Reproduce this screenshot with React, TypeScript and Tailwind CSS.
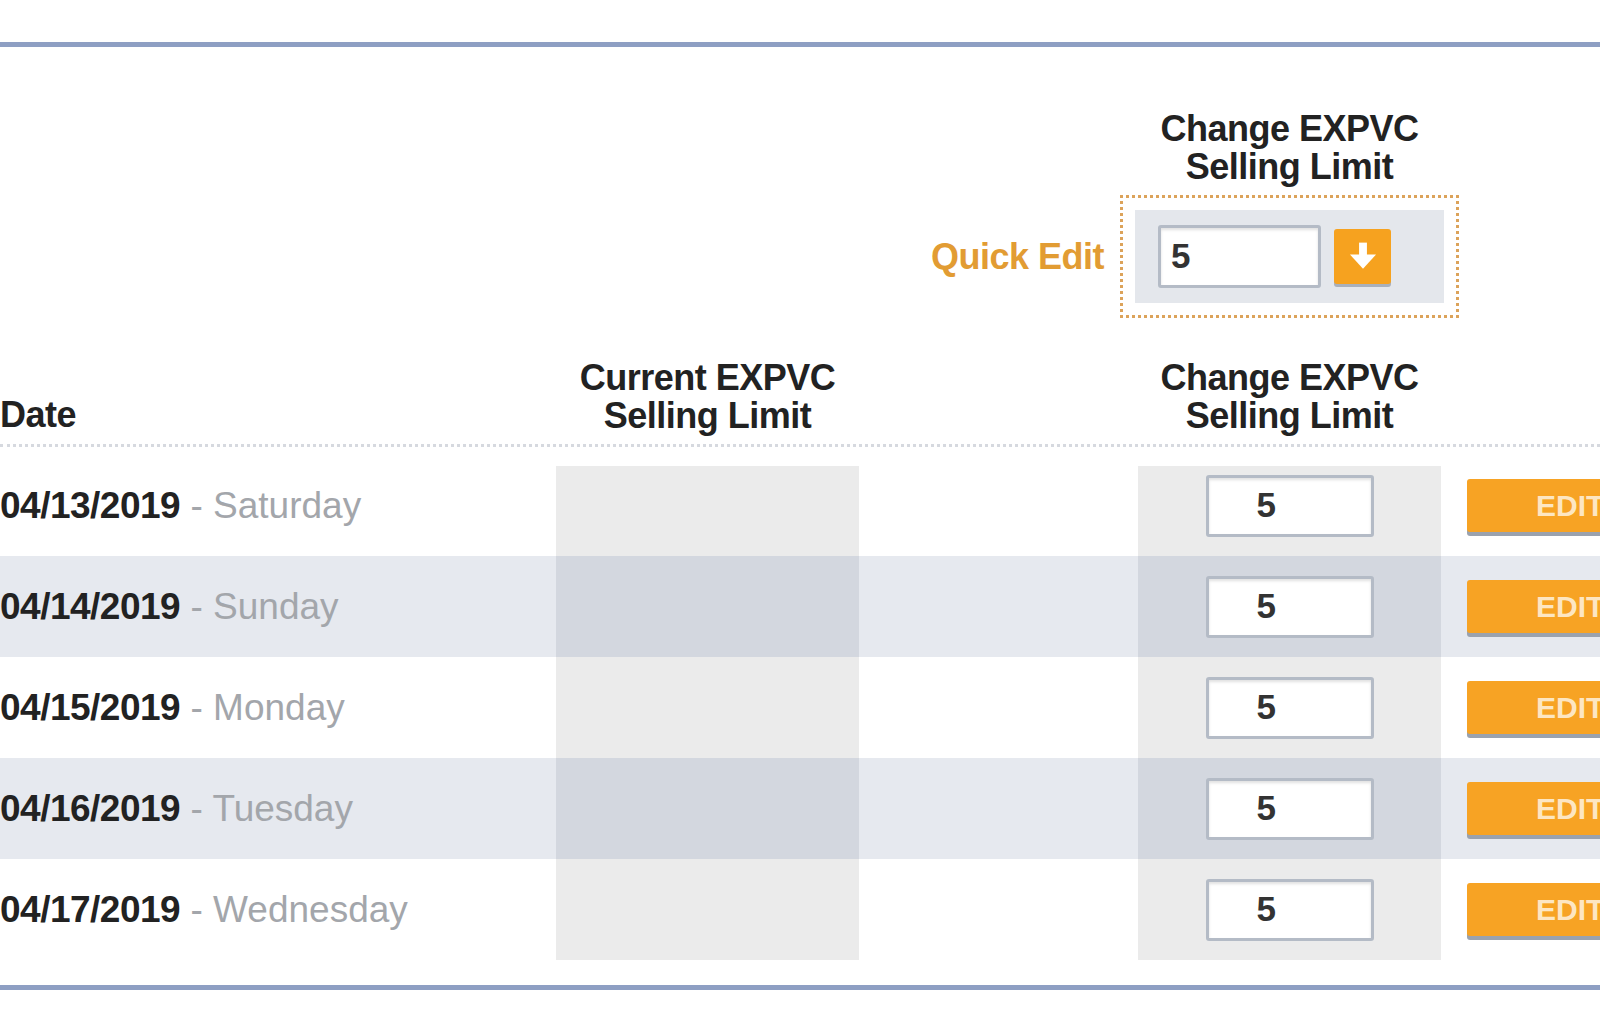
import React from "react";

const rows = [
  { date: "04/13/2019", day: "Saturday", limit: "5" },
  { date: "04/14/2019", day: "Sunday", limit: "5" },
  { date: "04/15/2019", day: "Monday", limit: "5" },
  { date: "04/16/2019", day: "Tuesday", limit: "5" },
  { date: "04/17/2019", day: "Wednesday", limit: "5" },
];

const cols = "grid grid-cols-[556px_303px_279px_303px_1fr]";

const DownArrow = () => (
  <svg width="34" height="34" viewBox="0 0 26 26">
    <rect x="10" y="2" width="6" height="10" fill="#fff" />
    <path d="M3 11 L23 11 L13 22 Z" fill="#fff" />
  </svg>
);

const LimitInput = ({ value, quick }: { value: string; quick?: boolean }) => (
  <div
    className={
      quick
        ? "w-[163px] h-[63px] bg-white border-[3px] border-[#b4bbc6] rounded-[3px] shadow-[inset_0_2px_3px_rgba(0,0,0,0.12)] flex items-center pl-[10px] text-[35px] font-bold text-[#333]"
        : "w-[168px] h-[62px] bg-white border-[3px] border-[#b4bbc6] rounded-[3px] shadow-[inset_0_2px_3px_rgba(0,0,0,0.12)] flex items-center pl-[48px] text-[35px] font-bold text-[#333]"
    }
  >
    {value}
  </div>
);

export default function App() {
  return (
    <div className="w-[1600px] h-[1032px] bg-white overflow-hidden font-['Liberation_Sans',Arial,sans-serif] text-[#222]">
      {/* TOP RULE */}
      <div className="pt-[42px]">
        <div className="h-[5px] bg-[#8e9fc3]" />
      </div>

      {/* QUICK EDIT */}
      <div className={`${cols} mt-[63px]`}>
        <div className="col-start-4 text-center font-bold text-[36px] leading-[38px] tracking-[-0.5px]">
          Change EXPVC
          <br />
          Selling Limit
        </div>
      </div>
      <div className={`${cols} mt-[9px] items-center`}>
        <div className="col-start-3 text-right pr-[34px] font-bold text-[36px] tracking-[-0.5px] text-[#e29c33]">
          Quick Edit
        </div>
        <div className="-mx-[18px] h-[123px] border-[3px] border-dotted border-[#dca35a] p-[12px]">
          <div className="h-full bg-[#e4e7ec] flex items-center gap-[13px] pl-[23px]">
            <LimitInput value="5" quick />
            <button className="w-[57px] h-[55px] bg-[#f6a21f] rounded-[3px] shadow-[0_3px_0_#a9b0bb] flex items-center justify-center">
              <DownArrow />
            </button>
          </div>
        </div>
      </div>

      {/* TABLE HEADER */}
      <div className={`${cols} mt-[41px] items-end font-bold text-[36px] leading-[38px] tracking-[-0.5px]`}>
        <div className="pb-[1px]">Date</div>
        <div className="text-center">
          Current EXPVC
          <br />
          Selling Limit
        </div>
        <div />
        <div className="text-center">
          Change EXPVC
          <br />
          Selling Limit
        </div>
      </div>
      <div className="mt-[9px] border-t-[3px] border-dotted border-[#d6d9df]" />

      {/* ROWS */}
      <div className="mt-[8px]">
        {rows.map((r, i) => {
          const alt = i % 2 === 1;
          return (
            <div
              key={r.date}
              className={`${cols} h-[101px] ${alt ? "bg-[#e6e9ef]" : "bg-white"}`}
            >
              <div className="flex items-center text-[37px] whitespace-nowrap">
                <span className="font-bold text-[#222] tracking-[-0.5px]">{r.date}</span>
                <span className="text-[#a3a6ab]">&nbsp;- {r.day}</span>
              </div>
              <div
                className={`${alt ? "bg-[#d3d7df]" : "bg-[#ebebeb]"} ${i === 0 ? "mt-[11px]" : ""}`}
              />
              <div />
              <div
                className={`${alt ? "bg-[#d3d7df]" : "bg-[#ebebeb]"} ${i === 0 ? "mt-[11px]" : ""} flex items-center justify-center`}
              >
                <div className={i === 0 ? "-mt-[11px]" : ""}>
                  <LimitInput value={r.limit} />
                </div>
              </div>
              <div className="flex items-center pl-[26px]">
                <button className="w-[220px] h-[53px] bg-[#f7a324] rounded-[3px] shadow-[0_4px_0_#9aa2ae] text-left pl-[69px] text-[30px] font-bold text-[#fde6c2]">
                  EDIT
                </button>
              </div>
            </div>
          );
        })}
      </div>

      {/* BOTTOM RULE */}
      <div className="mt-[25px] h-[5px] bg-[#8e9fc3]" />
    </div>
  );
}
